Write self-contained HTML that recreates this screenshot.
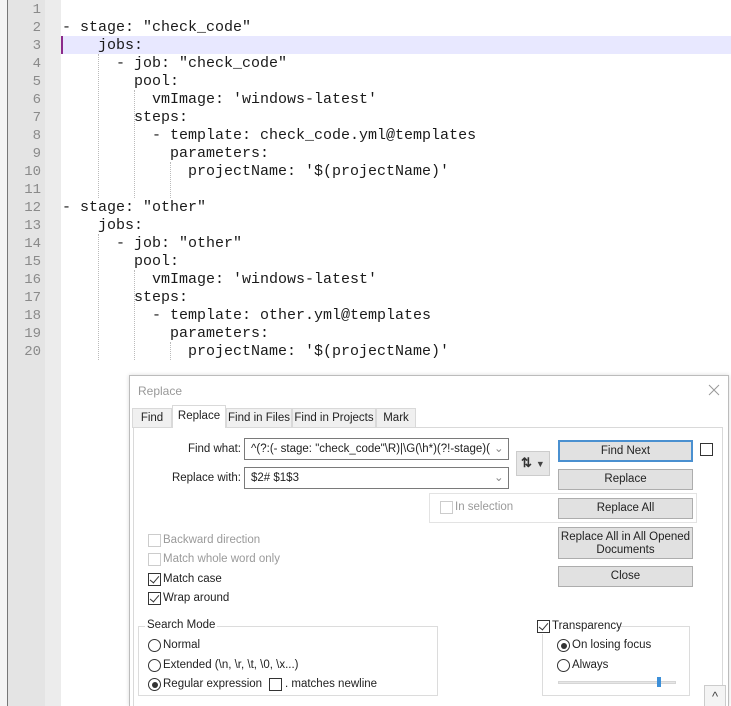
<!DOCTYPE html>
<html style="width:731px;height:706px;overflow:hidden"><head><style>
*{margin:0;padding:0;box-sizing:border-box}
body{width:731px;height:706px;overflow:hidden;background:#fff;position:relative;font-family:"Liberation Sans",sans-serif}
.ab{position:absolute}
.code{font-family:"Liberation Mono",monospace;font-size:15px;color:#1a1a1a;white-space:pre;line-height:18px}
.ln{font-family:"Liberation Mono",monospace;font-size:14px;color:#8a8a8a;line-height:18px;text-align:right;width:34px}
.ui{font-size:11.5px;color:#222;white-space:nowrap}
.dis{color:#9a9a9a}
.btn{position:absolute;background:#e1e1e1;border:1px solid #adadad;font-size:11.5px;color:#222;text-align:center;line-height:19px}
.cb{position:absolute;width:13px;height:13px;border:1px solid #333;background:#fff}
.cb.d{border-color:#ccc}
.cb.c::after{content:"";position:absolute;left:3px;top:0px;width:4px;height:8px;border:solid #333;border-width:0 1.3px 1.3px 0;transform:rotate(40deg)}
.rd{position:absolute;width:13px;height:13px;border:1px solid #333;border-radius:50%;background:#fff}
.rd.s::after{content:"";position:absolute;left:2.5px;top:2.5px;width:6px;height:6px;border-radius:50%;background:#333}
.guide{position:absolute;border-left:1px dotted #bbb;width:0}
.tab{position:absolute;height:20px;background:#f0f0f0;border:1px solid #d9d9d9;padding:3px 0 0 0;text-align:center;font-size:11.5px;color:#222;white-space:nowrap;overflow:hidden}
</style></head><body>
<div class="ab" style="left:0;top:0;width:7px;height:706px;background:#f4f4f4"></div>
<div class="ab" style="left:7px;top:0;width:1px;height:706px;background:#777"></div>
<div class="ab" style="left:8px;top:0;width:37px;height:706px;background:#e4e4e4"></div>
<div class="ab" style="left:45px;top:0;width:16px;height:706px;background:#ececec"></div>
<div class="ab ln" style="left:7px;top:1px">1<br>2<br>3<br>4<br>5<br>6<br>7<br>8<br>9<br>10<br>11<br>12<br>13<br>14<br>15<br>16<br>17<br>18<br>19<br>20</div>
<div class="ab" style="left:61px;top:36px;width:670px;height:18px;background:#e8e8ff"></div>
<div class="ab" style="left:61px;top:36px;width:2px;height:18px;background:#8b2a8b"></div>
<div class="guide" style="left:98px;top:54px;height:144px"></div>
<div class="guide" style="left:134px;top:90px;height:108px"></div>
<div class="guide" style="left:170px;top:162px;height:36px"></div>
<div class="guide" style="left:98px;top:234px;height:126px"></div>
<div class="guide" style="left:134px;top:270px;height:90px"></div>
<div class="guide" style="left:170px;top:342px;height:18px"></div>
<div class="ab code" style="left:62px;top:1px">
- stage: "check_code"
    jobs:
      - job: "check_code"
        pool:
          vmImage: 'windows-latest'
        steps:
          - template: check_code.yml@templates
            parameters:
              projectName: '$(projectName)'

- stage: "other"
    jobs:
      - job: "other"
        pool:
          vmImage: 'windows-latest'
        steps:
          - template: other.yml@templates
            parameters:
              projectName: '$(projectName)'</div>

<div class="ab" style="left:129px;top:375px;width:600px;height:331px;background:#fff;border:1px solid #bcbcbc;border-bottom:none;box-shadow:0 0 4px rgba(0,0,0,.15)"></div>
<div class="ab ui" style="left:138px;top:384px;color:#999;font-size:12px">Replace</div>
<div class="ab" style="left:707px;top:383px;width:14px;height:14px">
<svg width="14" height="14"><path d="M2 2L12 12M12 2L2 12" stroke="#999" stroke-width="1"/></svg></div>
<div class="ab" style="left:133px;top:427px;width:590px;height:279px;border:1px solid #d9d9d9;border-bottom:none;background:#fff"></div>
<div class="tab" style="left:132px;top:408px;width:40px">Find</div>
<div class="tab" style="left:172px;top:405px;width:54px;height:23px;background:#fff;border-bottom:none;padding-top:4px">Replace</div>
<div class="tab" style="left:226px;top:408px;width:66px">Find in Files</div>
<div class="tab" style="left:292px;top:408px;width:84px">Find in Projects</div>
<div class="tab" style="left:376px;top:408px;width:40px">Mark</div>

<div class="ab ui" style="left:150px;top:443px;width:91px;text-align:right">Find what:</div>
<div class="ab ui" style="left:244px;top:438px;width:265px;height:22px;border:1px solid #7a7a7a;padding:4px 0 0 6px;overflow:hidden">^(?:(- stage: "check_code"\R)|\G(\h*)(?!-stage)(.</div>
<div class="ab" style="left:490px;top:439px;width:18px;height:20px;background:#fff"></div>
<div class="ab ui" style="left:494px;top:441px;color:#888">&#8964;</div>
<div class="ab ui" style="left:150px;top:472px;width:91px;text-align:right">Replace with:</div>
<div class="ab ui" style="left:244px;top:467px;width:265px;height:22px;border:1px solid #7a7a7a;padding:4px 0 0 6px;background:#fff">$2# $1$3</div>
<div class="ab ui" style="left:494px;top:470px;color:#888">&#8964;</div>
<div class="ab" style="left:516px;top:451px;width:34px;height:25px;background:#e6e6e6;border:1px solid #ccc;font-size:13px;font-weight:bold;padding:3px 0 0 4px;color:#333">⇅<span style="font-size:9px;color:#444;margin-left:4px">▼</span></div>
<div class="ab" style="left:429px;top:493px;width:268px;height:30px;border:1px solid #e3e3e3"></div>
<div class="cb d" style="left:440px;top:501px"></div>
<div class="ab ui dis" style="left:455px;top:501px">In selection</div>

<div class="btn" style="left:558px;top:440px;width:135px;height:22px;border:2px solid #4a90d0">Find Next</div>
<div class="cb" style="left:700px;top:443px"></div>
<div class="btn" style="left:558px;top:469px;width:135px;height:21px">Replace</div>
<div class="btn" style="left:558px;top:498px;width:135px;height:21px">Replace All</div>
<div class="btn" style="left:558px;top:527px;width:135px;height:32px;line-height:13px;padding-top:3px">Replace All in All Opened<br>Documents</div>
<div class="btn" style="left:558px;top:566px;width:135px;height:21px">Close</div>

<div class="cb d" style="left:148px;top:534px"></div><div class="ab ui dis" style="left:163px;top:534px">Backward direction</div>
<div class="cb d" style="left:148px;top:553px"></div><div class="ab ui dis" style="left:163px;top:553px">Match whole word only</div>
<div class="cb c" style="left:148px;top:573px"></div><div class="ab ui" style="left:163px;top:573px">Match case</div>
<div class="cb c" style="left:148px;top:592px"></div><div class="ab ui" style="left:163px;top:592px">Wrap around</div>

<div class="ab" style="left:138px;top:626px;width:300px;height:70px;border:1px solid #dcdcdc"></div>
<div class="ab ui" style="left:145px;top:619px;background:#fff;padding:0 2px">Search Mode</div>
<div class="rd" style="left:148px;top:639px"></div><div class="ab ui" style="left:163px;top:639px">Normal</div>
<div class="rd" style="left:148px;top:659px"></div><div class="ab ui" style="left:163px;top:659px">Extended (\n, \r, \t, \0, \x...)</div>
<div class="rd s" style="left:148px;top:678px"></div><div class="ab ui" style="left:163px;top:678px">Regular expression</div>
<div class="cb" style="left:269px;top:678px"></div><div class="ab ui" style="left:285px;top:678px">. matches newline</div>

<div class="ab" style="left:542px;top:626px;width:148px;height:70px;border:1px solid #dcdcdc"></div>
<div class="ab" style="left:535px;top:618px;width:85px;height:16px;background:#fff"></div>
<div class="cb c" style="left:537px;top:620px"></div><div class="ab ui" style="left:552px;top:620px">Transparency</div>
<div class="rd s" style="left:557px;top:639px"></div><div class="ab ui" style="left:572px;top:639px">On losing focus</div>
<div class="rd" style="left:557px;top:659px"></div><div class="ab ui" style="left:572px;top:659px">Always</div>
<div class="ab" style="left:558px;top:681px;width:118px;height:3px;background:#e6e6e6;border:1px solid #d6d6d6"></div>
<div class="ab" style="left:657px;top:677px;width:4px;height:10px;background:#3c8fd8"></div>
<div class="ab" style="left:704px;top:685px;width:22px;height:21px;border:1px solid #ccc;border-bottom:none;background:#f4f4f4;font-size:13px;color:#444;text-align:center;line-height:22px">^</div>
</body></html>
